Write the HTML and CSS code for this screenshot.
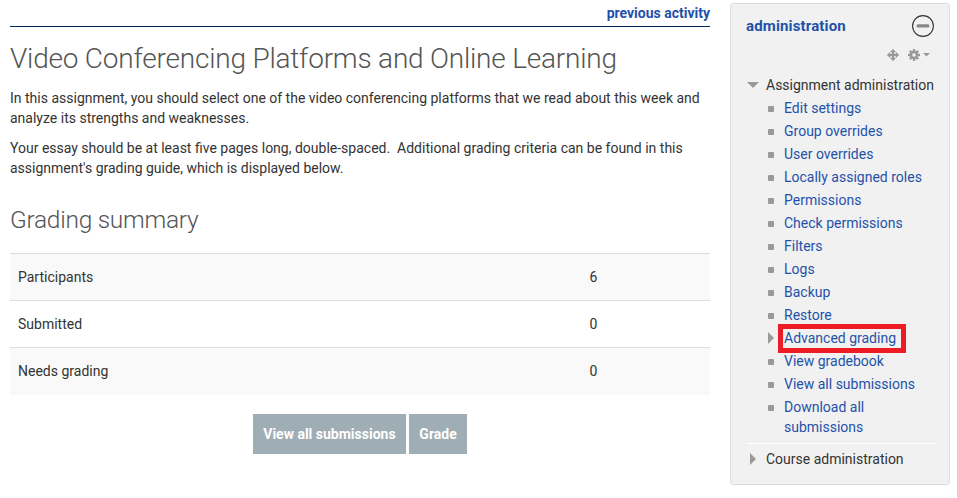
FILE: index.html
```html
<!DOCTYPE html>
<html lang="en">
<head>
<meta charset="utf-8">
<title>Video Conferencing Platforms and Online Learning</title>
<link rel="stylesheet" href="styles.css">
</head>
<body>
<div class="page">
  <main class="main">
    <nav class="activity-nav"><a href="#">previous activity</a></nav>
    <h2 class="title">Video Conferencing Platforms and Online Learning</h2>
    <div class="intro">
      <p>In this assignment, you should select one of the video conferencing platforms that we read about this week and<br>analyze its strengths and weaknesses.</p>
      <p>Your essay should be at least five pages long, double-spaced.&nbsp; Additional grading criteria can be found in this<br>assignment's grading guide, which is displayed below.</p>
    </div>
    <h3 class="subtitle">Grading summary</h3>
    <table class="summary">
      <tr><td class="label">Participants</td><td>6</td></tr>
      <tr><td class="label">Submitted</td><td>0</td></tr>
      <tr><td class="label">Needs grading</td><td>0</td></tr>
    </table>
    <div class="actions"><a class="btn" href="#">View all submissions</a><a class="btn" href="#">Grade</a></div>
  </main>
  <aside class="block">
    <header class="block-header">
      <h2>administration</h2>
      <svg class="collapse" width="24" height="24" viewBox="0 0 24 24"><circle cx="12" cy="12" r="10.4" fill="none" stroke="#333" stroke-width="1.1"/><rect x="5.5" y="10.3" width="13" height="3.2" rx="1.6" fill="#888"/></svg>
    </header>
    <div class="controls">
      <svg width="12" height="12" viewBox="0 0 12 12" fill="#999"><path d="M6 0 8.7 3H7v2h2V3.3L12 6 9 8.7V7H7v2h1.7L6 12 3.3 9H5V7H3v1.7L0 6l3-2.7V5h2V3H3.3z" stroke="#999" stroke-width=".3"/></svg>
      <svg class="gear" width="12" height="12" viewBox="0 0 12 12"><g stroke="#999" stroke-width="2.3"><path d="M6 0v12M0 6h12M1.8 1.8l8.4 8.4M10.2 1.8l-8.4 8.4"/></g><circle cx="6" cy="6" r="4.3" fill="#999"/><circle cx="6" cy="6" r="1.8" fill="#f1f1f1"/></svg>
      <svg class="caret" width="7" height="4" viewBox="0 0 7 4"><path d="M0 0h7L3.5 3.5z" fill="#999"/></svg>
    </div>
    <div class="branch open">Assignment administration</div>
    <ul class="tree">
      <li><a href="#">Edit settings</a></li>
      <li><a href="#">Group overrides</a></li>
      <li><a href="#">User overrides</a></li>
      <li><a href="#">Locally assigned roles</a></li>
      <li><a href="#">Permissions</a></li>
      <li><a href="#">Check permissions</a></li>
      <li><a href="#">Filters</a></li>
      <li><a href="#">Logs</a></li>
      <li><a href="#">Backup</a></li>
      <li><a href="#">Restore</a></li>
      <li class="parent"><a class="marked" href="#">Advanced grading</a></li>
      <li><a href="#">View gradebook</a></li>
      <li><a href="#">View all submissions</a></li>
      <li><a href="#">Download all<br>submissions</a></li>
    </ul>
    <div class="branch closed">Course administration</div>
  </aside>
</div>
</body>
</html>
```
FILE: styles.css
```css
*, *::before, *::after { box-sizing: border-box; }
body { margin: 0; background: #fff; color: #333; font: 14px/20px Roboto, "Liberation Sans", sans-serif; }
a { color: #1f51aa; text-decoration: none; }
h2, h3, p { margin: 0; }
.page { display: flex; align-items: flex-start; gap: 20px; padding: 3px 7px 0 10px; }
.main { width: 700px; }
.activity-nav { height: 24px; border-bottom: 1px solid #002b5c; text-align: right; font-weight: 700; }
.title { margin-top: 12px; font-size: 28px; line-height: 40px; font-weight: 300; letter-spacing: -0.21px; color: #555; white-space: nowrap; }
.intro { margin-top: 9px; white-space: nowrap; }
.intro p { margin-bottom: 10px; }
.subtitle { margin-top: 22px; font-size: 24.5px; line-height: 40px; font-weight: 300; letter-spacing: -0.27px; color: #555; }
.summary { width: 100%; margin-top: 13px; border-collapse: collapse; table-layout: fixed; }
.summary td { height: 47px; padding: 0 8px; border-top: 1px solid #ddd; }
.summary tr:nth-child(odd) { background: #f9f9f9; }
.summary .label { width: 571.5px; }
.actions { display: flex; justify-content: center; gap: 3px; margin-top: 19px; }
.btn { padding: 10px 10.4px; background: #9fadb5; color: #fff; font-weight: 700; }
.block { width: 220px; height: 482px; padding: 8px 13px 0 15px; background: #f1f1f1; border: 1px solid #d7dde1; border-radius: 3px; }
.block-header { display: flex; justify-content: space-between; align-items: flex-start; height: 36px; padding-top: 2px; }
.block-header h2 { padding-top: 2px; color: #1f51aa; font-size: 15px; line-height: 20px; letter-spacing: 0.15px; }
.collapse { margin-right: 1px; }
.controls { display: flex; justify-content: flex-end; align-items: center; height: 14px; padding-right: 6px; }
.gear { margin-left: 9px; }
.caret { margin-left: 3px; }
.branch { position: relative; padding-left: 20px; white-space: nowrap; }
.branch::before { content: ""; position: absolute; background: #999; }
.open { margin-top: 13px; }
.open::before { left: 1px; top: 7px; width: 12px; height: 6px; clip-path: polygon(0 0, 100% 0, 50% 100%); }
.closed { margin-top: 5px; }
.closed::before { left: 4px; top: 4px; width: 6px; height: 12px; clip-path: polygon(0 0, 100% 50%, 0 100%); }
.tree { list-style: none; margin: 3px 0 0; padding: 0 0 3px 38px; border-bottom: 1px solid #fff; }
.tree li { position: relative; margin-bottom: 3px; }
.tree li::before { content: ""; position: absolute; left: -16px; top: 8px; width: 6px; height: 6px; border-radius: 1px; background: #999; }
.tree .parent::before { top: 4px; height: 12px; border-radius: 0; clip-path: polygon(0 0, 100% 50%, 0 100%); }
.marked::after { content: ""; position: absolute; left: -6px; top: -4px; width: 128px; height: 29px; border: 5px solid #ed1c24; }
```
